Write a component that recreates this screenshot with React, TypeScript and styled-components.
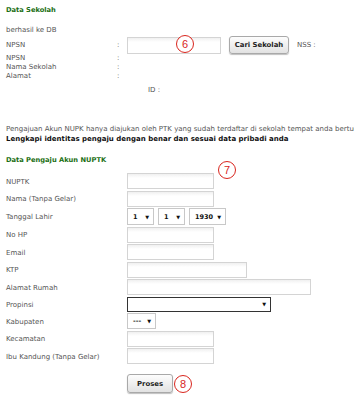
import React from "react";
import styled, { createGlobalStyle } from "styled-components";

const GlobalStyle = createGlobalStyle`
  html, body { margin: 0; padding: 0; background: #fff; }
  body {
    font-family: "DejaVu Sans", Verdana, sans-serif;
    font-size: 7px;
    color: #555;
    width: 354px;
    height: 400px;
    overflow: hidden;
  }
`;

const Page = styled.div`
  padding: 6px 0 0 6px;
  display: flex;
  flex-direction: column;
`;

const SectionTitle = styled.div<{ $mt?: number }>`
  color: #1a6e12;
  font-weight: bold;
  font-size: 6.7px;
  line-height: 9px;
  margin-top: ${(p) => p.$mt ?? 0}px;
`;

const Line = styled.div<{ $mt?: number; $indent?: number }>`
  line-height: 9px;
  margin-top: ${(p) => p.$mt ?? 0}px;
  padding-left: ${(p) => p.$indent ?? 0}px;
  white-space: nowrap;
`;

const SchoolRow = styled.div`
  display: flex;
  align-items: center;
  margin-top: 1px;
  height: 18px;
`;

const Label = styled.div<{ $w: number }>`
  width: ${(p) => p.$w}px;
  flex: none;
`;

const Colon = styled.div`
  width: 10px;
  flex: none;
`;

const FieldWrap = styled.div`
  position: relative;
  display: flex;
`;

const TextInput = styled.div<{ $w: number; $h?: number }>`
  width: ${(p) => p.$w}px;
  height: ${(p) => p.$h ?? 16}px;
  box-sizing: border-box;
  border: 1px solid #d4d4d4;
  background: linear-gradient(#f0f0f0, #fff 4px);
`;

const Button = styled.div<{ $w: number; $h: number }>`
  width: ${(p) => p.$w}px;
  height: ${(p) => p.$h}px;
  box-sizing: border-box;
  border: 1px solid #a9a9a9;
  border-radius: 3px;
  background: linear-gradient(#fdfdfd, #e2e2e2);
  box-shadow: 0 1px 1px rgba(0, 0, 0, 0.25);
  display: flex;
  align-items: center;
  justify-content: center;
  font-weight: bold;
  color: #222;
  font-size: 6.9px;
`;

const NssText = styled.div`
  margin-left: 8px;
`;

const InfoGrid = styled.div`
  display: grid;
  grid-template-columns: 111px 10px;
  line-height: 9px;
`;

const Notice = styled.div`
  margin-top: 30px;
  line-height: 9.5px;
  white-space: nowrap;
  overflow: hidden;
`;

const Strong = styled.div`
  font-weight: bold;
  color: #111;
`;

const FormGrid = styled.div`
  display: grid;
  grid-template-columns: 121px auto;
  row-gap: 1.5px;
  align-items: center;
  margin-top: 8px;
`;

const FormLabel = styled.div`
  line-height: 9px;
  padding-top: 2px;
`;

const Selects = styled.div`
  display: flex;
  gap: 4px;
`;

const Select = styled.div<{ $w: number; $h: number; $dark?: boolean }>`
  width: ${(p) => p.$w}px;
  height: ${(p) => p.$h}px;
  box-sizing: border-box;
  border: 1px solid ${(p) => (p.$dark ? "#333" : "#c8c8c8")};
  background: #fff;
  display: flex;
  align-items: center;
  padding: 0 4px 0 5px;
  color: #111;
  font-weight: bold;
  font-size: 6.5px;
`;

const Arrow = styled.span`
  margin-left: auto;
  font-size: 5px;
  color: #111;
`;

const SubmitRow = styled.div`
  display: flex;
  align-items: center;
  margin-top: 10px;
  padding-left: 121px;
`;

const Badge = styled.div<{ $x?: number; $y?: number; $static?: boolean }>`
  position: ${(p) => (p.$static ? "static" : "absolute")};
  left: ${(p) => p.$x ?? 0}px;
  top: ${(p) => p.$y ?? 0}px;
  width: 18px;
  height: 18px;
  box-sizing: border-box;
  border: 1.4px solid #d9251d;
  border-radius: 50%;
  background: #fff;
  color: #d9251d;
  font-family: "Liberation Sans", Arial, sans-serif;
  font-size: 11px;
  display: flex;
  align-items: center;
  justify-content: center;
  margin-left: ${(p) => (p.$static ? 1 : 0)}px;
`;

const fields: { label: string; kind: "input" | "date" | "select"; w: number }[] = [
  { label: "NUPTK", kind: "input", w: 87 },
  { label: "Nama (Tanpa Gelar)", kind: "input", w: 87 },
  { label: "Tanggal Lahir", kind: "date", w: 0 },
  { label: "No HP", kind: "input", w: 87 },
  { label: "Email", kind: "input", w: 87 },
  { label: "KTP", kind: "input", w: 120 },
  { label: "Alamat Rumah", kind: "input", w: 184 },
  { label: "Propinsi", kind: "select", w: 144 },
  { label: "Kabupaten", kind: "select", w: 29 },
  { label: "Kecamatan", kind: "input", w: 87 },
  { label: "Ibu Kandung (Tanpa Gelar)", kind: "input", w: 87 },
];

export default function App() {
  return (
    <>
      <GlobalStyle />
      <Page>
        <SectionTitle>Data Sekolah</SectionTitle>
        <Line $mt={11}>berhasil ke DB</Line>
        <SchoolRow>
          <Label $w={111}>NPSN</Label>
          <Colon>:</Colon>
          <FieldWrap>
            <TextInput $w={94} $h={17} />
            <Badge $x={49} $y={-2}>6</Badge>
          </FieldWrap>
          <Button $w={60} $h={18} style={{ marginLeft: 8 }}>
            Cari Sekolah
          </Button>
          <NssText>NSS :</NssText>
        </SchoolRow>
        <InfoGrid>
          <span>NPSN</span>
          <span>:</span>
          <span>Nama Sekolah</span>
          <span>:</span>
          <span>Alamat</span>
          <span>:</span>
        </InfoGrid>
        <Line $mt={5} $indent={142}>ID :</Line>
        <Notice>
          Pengajuan Akun NUPK hanya diajukan oleh PTK yang sudah terdaftar di sekolah tempat anda bertugas
          <Strong>Lengkapi identitas pengaju dengan benar dan sesuai data pribadi anda</Strong>
        </Notice>
        <SectionTitle $mt={12}>Data Pengaju Akun NUPTK</SectionTitle>
        <FormGrid>
          {fields.map((f, i) => (
            <React.Fragment key={f.label}>
              <FormLabel>{f.label}</FormLabel>
              <FieldWrap>
                {f.kind === "input" && <TextInput $w={f.w} />}
                {f.kind === "date" && (
                  <Selects>
                    <Select $w={27} $h={17}>
                      1<Arrow>▼</Arrow>
                    </Select>
                    <Select $w={27} $h={17}>
                      1<Arrow>▼</Arrow>
                    </Select>
                    <Select $w={37} $h={17}>
                      1930<Arrow>▼</Arrow>
                    </Select>
                  </Selects>
                )}
                {f.kind === "select" && f.w > 100 && (
                  <Select $w={f.w} $h={15} $dark>
                    <Arrow>▼</Arrow>
                  </Select>
                )}
                {f.kind === "select" && f.w <= 100 && (
                  <Select $w={f.w} $h={16}>
                    ---<Arrow>▼</Arrow>
                  </Select>
                )}
                {i === 0 && <Badge $x={91} $y={-12}>7</Badge>}
              </FieldWrap>
            </React.Fragment>
          ))}
        </FormGrid>
        <SubmitRow>
          <Button $w={46} $h={19}>Proses</Button>
          <Badge $static>8</Badge>
        </SubmitRow>
      </Page>
    </>
  );
}
